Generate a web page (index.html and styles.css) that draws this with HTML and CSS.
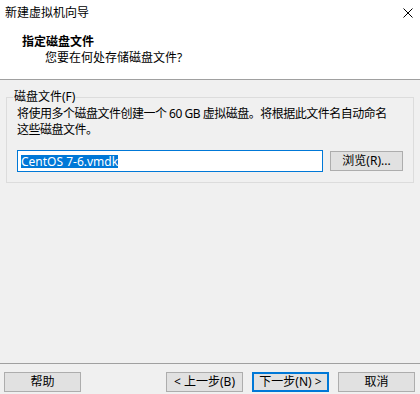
FILE: index.html
```html
<!DOCTYPE html>
<html lang="zh-CN">
<head>
    <meta charset="UTF-8">
    <title>新建虚拟机向导</title>
    <link rel="stylesheet" href="styles.css">
</head>
<body>
    <div class="window">
        <div class="top">
            <div class="titlebar">
                <span class="title">新建虚拟机向导</span>
                <svg class="close" width="10" height="10" viewBox="0 0 10 10">
                    <path d="M0.5 0.5 L9.5 9.5 M9.5 0.5 L0.5 9.5" stroke="#000" stroke-width="1" fill="none"/>
                </svg>
            </div>
            <div class="heading">指定磁盘文件</div>
            <div class="subheading">您要在何处存储磁盘文件?</div>
        </div>

        <div class="main">
            <fieldset class="group">
                <legend>磁盘文件(F)</legend>
                <p class="desc">将使用多个磁盘文件创建一个 60 GB 虚拟磁盘。将根据此文件名自动命名<br>这些磁盘文件。</p>
                <div class="row">
                    <div class="field"><span class="sel">CentOS 7-6.vmdk</span></div>
                    <button class="btn browse">浏览(R)...</button>
                </div>
            </fieldset>
        </div>

        <div class="footer">
            <button class="btn">帮助</button>
            <div class="nav">
                <button class="btn">&lt; 上一步(B)</button>
                <button class="btn default">下一步(N) &gt;</button>
                <button class="btn">取消</button>
            </div>
        </div>
    </div>
</body>
</html>
```

FILE: styles.css
```css
body {
    margin: 0;
    font-family: "Noto Sans", "Noto Sans CJK SC", sans-serif;
    font-size: 12px;
    color: #000;
    background: #f0f0f0;
}
.window {
    width: 420px;
    height: 394px;
    display: flex;
    flex-direction: column;
    overflow: hidden;
}
.top {
    height: 79px;
    background: #fff;
    border-bottom: 1px solid #a0a0a0;
}
.titlebar {
    height: 26px;
    display: flex;
    align-items: center;
    justify-content: space-between;
    padding: 0 7px 0 5px;
}
.title {
    line-height: 16px;
}
.close {
    display: block;
}
.heading {
    margin: 8px 0 0 22px;
    font-weight: bold;
    line-height: 16px;
}
.subheading {
    margin-left: 45px;
    line-height: 16px;
}
.main {
    flex: 1;
    padding: 10px 8px 0 6px;
}
.group {
    margin: 0;
    padding: 0 10px 10px 10px;
    border: 1px solid #dcdcdc;
}
.group legend {
    margin-left: -4px;
    padding: 0 1px;
    line-height: 14px;
}
.desc {
    margin: 2px 0 0;
    line-height: 16px;
    white-space: nowrap;
    letter-spacing: -0.5px;
}
.row {
    display: flex;
    align-items: center;
    gap: 7px;
    margin-top: 12px;
}
.field {
    width: 298px;
    height: 20px;
    padding: 0 3px;
    background: #fff;
    border: 1px solid #0078d7;
    display: flex;
    align-items: center;
}
.sel {
    background: #0078d7;
    color: #fff;
    line-height: 13px;
}
.btn {
    font-family: inherit;
    font-size: 12px;
    color: #000;
    background: #e1e1e1;
    border: 1px solid #adadad;
    height: 20px;
    width: 77px;
    padding: 0;
    line-height: 16px;
}
.browse {
    width: 73px;
}
.footer {
    height: 31px;
    border-top: 1px solid #a0a0a0;
    display: flex;
    align-items: flex-start;
    justify-content: space-between;
    padding: 8px 5px 0 4px;
    box-sizing: border-box;
}
.nav {
    display: flex;
    gap: 9px;
}
.default {
    border: 2px solid #0078d7;
}
```
